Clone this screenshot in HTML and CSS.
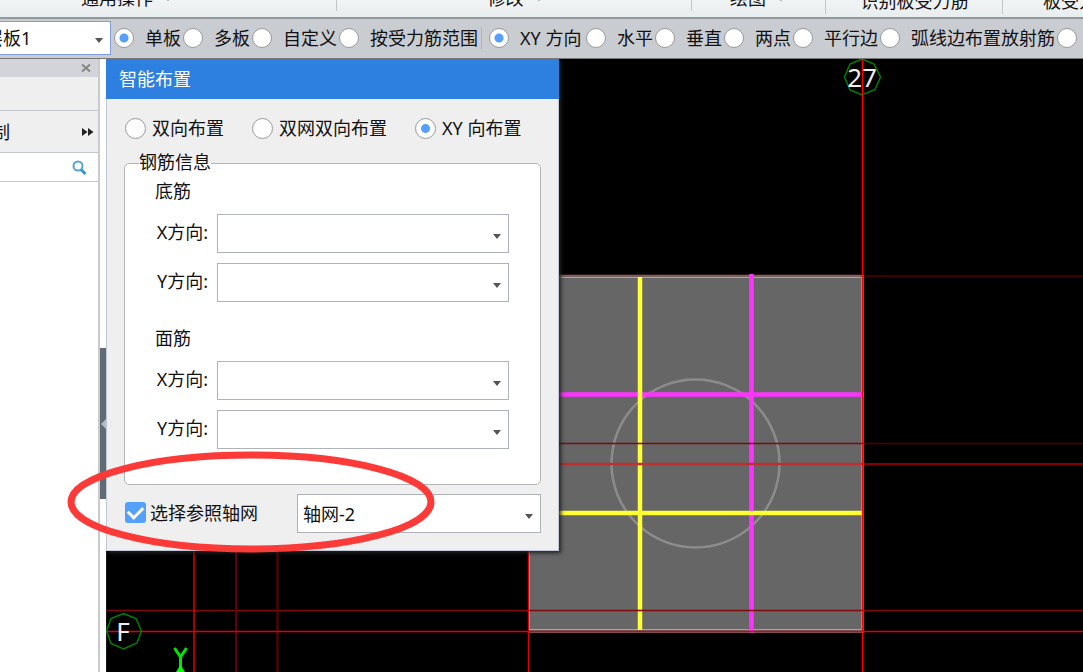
FILE: index.html
```html
<!DOCTYPE html>
<html lang="zh-CN">
<head>
<meta charset="utf-8">
<title>智能布置</title>
<link rel="stylesheet" href="styles.css">
</head>
<body>
<div class="app">
  <header class="ribbon">
    <div class="ribbon-group group-common">通用操作<i class="ribbon-arrow"></i></div>
    <div class="ribbon-group group-modify">修改<i class="ribbon-arrow"></i></div>
    <div class="ribbon-group group-draw">绘图<i class="ribbon-arrow"></i></div>
    <div class="ribbon-group group-detect">识别板受力筋</div>
    <div class="ribbon-group group-rebar">板受力筋</div>
  </header>

  <form class="options">
    <div class="combo combo-layer"><select aria-label="板层"><option>层板1</option></select></div>
    <div class="option-set">
      <label class="option"><input class="radio" type="radio" name="range" checked>单板</label>
      <label class="option"><input class="radio" type="radio" name="range">多板</label>
      <label class="option"><input class="radio" type="radio" name="range">自定义</label>
      <label class="option"><input class="radio" type="radio" name="range">按受力筋范围</label>
    </div>
    <div class="option-set option-set-direction">
      <label class="option option-xy"><input class="radio" type="radio" name="direction" checked>XY 方向</label>
      <label class="option"><input class="radio" type="radio" name="direction">水平</label>
      <label class="option"><input class="radio" type="radio" name="direction">垂直</label>
      <label class="option"><input class="radio" type="radio" name="direction">两点</label>
      <label class="option"><input class="radio" type="radio" name="direction">平行边</label>
      <label class="option"><input class="radio" type="radio" name="direction">弧线边布置放射筋</label>
      <input class="radio" type="radio" name="direction" aria-label="其他">
    </div>
  </form>

  <main class="workspace">
    <aside class="side">
      <div class="side-panel">
        <div class="side-header">
          <button class="icon-button" type="button" aria-label="关闭">
            <svg width="10" height="10" viewBox="0 0 10 10"><path d="M1 1.5L9 8.5M9 1.5L1 8.5" stroke="#858585" stroke-width="2"/></svg>
          </button>
        </div>
        <div class="side-row side-blank"></div>
        <div class="side-row side-tools">
          <span class="side-tool">制</span>
          <button class="icon-button" type="button" aria-label="更多">
            <svg width="12" height="10" viewBox="0 0 12 10"><path d="M0 1L5.5 5L0 9ZM6 1L11.5 5L6 9Z" fill="#222"/></svg>
          </button>
        </div>
        <div class="side-search">
          <input type="text" aria-label="搜索">
          <button class="icon-button" type="button" aria-label="搜索">
            <svg width="15" height="15" viewBox="0 0 15 15" fill="none"><circle cx="6" cy="6" r="4.5" stroke="#55a5d6" stroke-width="2"/><path d="M9 9.5L13.5 14" stroke="#3d94cc" stroke-width="3"/></svg>
          </button>
        </div>
      </div>
      <div class="splitter">
        <button class="splitter-handle" type="button" aria-label="收起"></button>
      </div>
    </aside>

    <section class="canvas">
      <svg class="drawing" aria-hidden="true">
        <g transform="translate(-106 -59)">
          <rect x="528" y="275" width="336" height="358" fill="#666"/>
          <circle cx="695.500" cy="463.500" r="84" fill="none" stroke="#8c8c8c" stroke-width="2.500"/>
          <path d="M528 277.500H863M861.500 277V630M529.500 277V630M528 629.500H863" fill="none" stroke="#a6a6a6"/>
          <path d="M528 275.500H864" stroke="#a94f50" stroke-width="1.500"/>
          <path d="M864 276H2400" stroke="#520000" stroke-width="1.500"/>
          <path d="M751.500 274V632.500M528 394.500H864" stroke="#ff33ff" stroke-width="4.500"/>
          <path d="M640 277V630M528 513H862" stroke="#ffff33" stroke-width="4.500"/>
          <path d="M528 443.500H864M106 610.500H2400" stroke="#7d0b0b" stroke-width="1.500"/>
          <path d="M864 443.500H2400" stroke="#520000" stroke-width="1.500"/>
          <path d="M528 464H864" stroke="#bd3030" stroke-width="2.500"/>
          <path d="M864 464H2400" stroke="#860000" stroke-width="2"/>
          <path d="M236 540V1600M277.500 540V1600" stroke="#650000" stroke-width="2"/>
          <path d="M106 631.500H2400M194 540V1600M528.500 540V1600" stroke="#e00008" stroke-width="1.500"/>
          <path d="M106 60V1600" stroke="#333"/>
          <path d="M862 59L874 64L880.500 77L875 89.500L862 95L850 90L844.500 77L850 64Z" fill="none" stroke="#008000" stroke-width="1.500"/>
          <text class="axis-text" x="862" y="87">27</text>
          <path d="M862.500 59V1600" stroke="#f00" stroke-width="1.500"/>
          <path d="M123.500 613.500L136 618.500L141.500 631L137 643L123.500 649L111 643.500L106.500 631L111 618.500Z" fill="none" stroke="#008000" stroke-width="1.500"/>
          <text class="axis-text" x="123" y="641">F</text>
          <path d="M174.500 648L180.500 657L186.500 648M180.500 656V672" fill="none" stroke="#00e600" stroke-width="3"/>
          <path d="M176 672L180.500 665L185 672Z" fill="#00ff00"/>
        </g>
      </svg>

      <form class="dialog" role="dialog" aria-label="智能布置">
        <h1 class="dialog-title">智能布置</h1>
        <div class="dialog-body">
          <div class="modes">
            <label class="mode"><input class="radio" type="radio" name="mode">双向布置</label>
            <label class="mode"><input class="radio" type="radio" name="mode">双网双向布置</label>
            <label class="mode"><input class="radio" type="radio" name="mode" checked>XY 向布置</label>
          </div>
          <fieldset class="rebar">
            <legend>钢筋信息</legend>
            <div class="rebar-set">
              <h2>底筋</h2>
              <div class="field"><label for="bx">X方向:</label><div class="combo"><select id="bx"><option></option></select></div></div>
              <div class="field"><label for="by">Y方向:</label><div class="combo"><select id="by"><option></option></select></div></div>
            </div>
            <div class="rebar-set">
              <h2>面筋</h2>
              <div class="field"><label for="tx">X方向:</label><div class="combo"><select id="tx"><option></option></select></div></div>
              <div class="field"><label for="ty">Y方向:</label><div class="combo"><select id="ty"><option></option></select></div></div>
            </div>
          </fieldset>
          <div class="reference">
            <label class="check-label"><input class="check" type="checkbox" checked>选择参照轴网</label>
            <div class="combo"><select aria-label="参照轴网"><option>轴网-2</option></select></div>
          </div>
        </div>
      </form>
    </section>

    <svg class="callout" width="368" height="104" viewBox="0 0 368 104" aria-hidden="true">
      <ellipse cx="184" cy="52" rx="180" ry="47" fill="none" stroke="#fc3a38" stroke-width="7"/>
    </svg>
  </main>
</div>
</body>
</html>
```
FILE: styles.css
```css
* { box-sizing: border-box; }

body {
  margin: 0;
  font-family: "Noto Sans", "Noto Sans CJK SC", sans-serif;
  font-size: 18px;
  line-height: 24px;
  color: #111;
}

select, input, button { font: inherit; color: inherit; margin: 0; }

.app {
  display: flex;
  flex-direction: column;
  height: 100vh;
  overflow: hidden;
}

/* Ribbon */
.ribbon {
  display: flex;
  flex: none;
  height: 19px;
  overflow: hidden;
  background: linear-gradient(#f1f4f4, #e8edee);
  border-bottom: 2px solid #92979c;
}
.ribbon-group {
  display: flex;
  flex: none;
  align-items: center;
  justify-content: center;
  height: 26px;
  margin-top: -15px;
  white-space: nowrap;
}
.ribbon-group + .ribbon-group { box-shadow: -1px 0 #c3c6c9; }
.group-common {
  width: 337px;
  padding-right: 166px;
  justify-content: flex-end;
}
.group-modify { width: 355px; }
.group-draw { width: 134px; padding-right: 4px; }
.group-detect { width: 177px; }
.group-rebar {
  flex: 1 0 auto;
  padding-left: 40px;
  justify-content: flex-start;
}
.ribbon .group-detect,
.ribbon .group-rebar { margin-top: -12px; }
.ribbon-arrow {
  margin: 2px 0 0 12px;
  border: 3px solid transparent;
  border-top: 4px solid #555;
  border-bottom: 0;
}

/* Shared controls */
.radio {
  appearance: none;
  flex: none;
  width: 20px;
  height: 20px;
  border: 1px solid #999;
  border-radius: 50%;
  background: #fff;
}
.radio:checked { background: radial-gradient(circle, #55a0ff 4px, #fff 5px); }

.combo { position: relative; display: flex; }
.combo select {
  appearance: none;
  width: 100%;
  height: 39px;
  padding: 0 24px 0 5px;
  border: 1px solid #afb2b9;
  border-radius: 0;
  background: #fff;
}
.combo::after {
  content: "";
  position: absolute;
  right: 8px;
  top: 50%;
  border: 4px solid transparent;
  border-top: 5px solid #555;
  border-bottom: 0;
  pointer-events: none;
}

/* Options bar */
.options {
  display: flex;
  flex: none;
  align-items: center;
  height: 40px;
  padding-bottom: 1px;
  overflow: hidden;
  background: #c9ccd1;
  border-bottom: 1px solid #777;
}
.combo-layer { flex: none; width: 130px; margin-left: -19px; }
.combo-layer select {
  height: 34px;
  padding-left: 3px;
  border: 1px solid #7f9cdc;
}
.option-set {
  display: flex;
  flex: none;
  gap: 2px;
  padding: 0 3px;
}
.option-set-direction {
  padding-left: 7px;
  border-left: 1px solid #b0b3b8;
}
.option {
  display: flex;
  align-items: center;
  gap: 11px;
  line-height: 22px;
  white-space: nowrap;
}
.option-xy { min-width: 95px; }
.option-set > .radio { margin-top: 1px; }

/* Side panel */
.workspace {
  position: relative;
  display: flex;
  flex: 1;
  min-height: 0;
}
.side { display: flex; flex: none; width: 106px; }
.side-panel {
  flex: 1;
  min-width: 0;
  background: #fff;
  border-right: 2px solid #cacacc;
}
.side-header {
  display: flex;
  align-items: center;
  justify-content: flex-end;
  height: 18px;
  padding-right: 7px;
  background: #d3d4d9;
}
.icon-button {
  display: flex;
  flex: none;
  padding: 0;
  border: 0;
  background: none;
}
.side-row { background: #efefef; border-bottom: 1px solid #c3c6ca; }
.side-blank { height: 34px; }
.side-tools {
  display: flex;
  align-items: center;
  justify-content: space-between;
  height: 42px;
  padding-right: 4px;
  overflow: hidden;
}
.side-tool { margin-left: -8px; }
.side-search {
  display: flex;
  align-items: center;
  height: 29px;
  padding-right: 11px;
  border-bottom: 1px solid #c3c6ca;
}
.side-search input {
  flex: 1;
  min-width: 0;
  height: 26px;
  border: 0;
}
.splitter {
  display: flex;
  flex: none;
  width: 6px;
  padding-top: 289px;
  background: #fff;
}
.splitter-handle {
  display: flex;
  align-items: center;
  justify-content: flex-end;
  width: 6px;
  height: 151px;
  padding: 0;
  border: 0;
  background: #616b75;
}
.splitter-handle::before {
  content: "";
  border: 5px solid transparent;
  border-right-color: #b5babf;
  border-left: 0;
}

/* Drawing area */
.canvas {
  position: relative;
  flex: 1;
  min-width: 0;
  overflow: hidden;
  background: #000;
}
.drawing { display: block; width: 100%; height: 100%; }
.axis-text {
  font-size: 26px;
  text-anchor: middle;
  fill: #eee;
}
.callout { position: absolute; left: 67px; top: 391px; }

/* Dialog window */
.dialog {
  position: absolute;
  left: 0;
  top: 0;
  width: 453px;
  background: #efefef;
  box-shadow: 2px 2px 4px #222;
}
.dialog-title {
  margin: 0;
  padding: 8px 13px;
  background: #2d7fe0;
  color: #fff;
  font-size: 18px;
  font-weight: 400;
}
.dialog-body {
  padding: 17px;
  border: 1px solid #c0c8d6;
  border-top: 0;
}
.modes { display: flex; gap: 28px; padding-left: 1px; }
.mode { display: flex; align-items: center; gap: 6px; }
.dialog .radio { width: 21px; height: 21px; }
.rebar {
  display: flex;
  flex-direction: column;
  gap: 24px;
  margin: 12px 0 9px;
  padding: 4px 31px 35px 30px;
  border: 1px solid #b4b4b4;
  border-radius: 5px;
  background: #fff;
}
.rebar legend {
  margin-left: -16px;
  padding: 0 0 3px;
  line-height: 20px;
}
.rebar-set { display: flex; flex-direction: column; gap: 10px; }
.rebar-set h2 {
  margin: 0 0 1px;
  font-size: 18px;
  font-weight: 400;
}
.field { display: flex; align-items: center; gap: 9px; }
.field label {
  display: flex;
  justify-content: flex-end;
  width: 53px;
  padding-bottom: 4px;
  white-space: nowrap;
}
.field .combo { flex: 1; }
.reference { display: flex; justify-content: space-between; align-items: center; }
.reference .combo { width: 244px; }
.check-label {
  display: flex;
  align-items: center;
  gap: 4px;
  padding: 0 0 2px 1px;
}
.check {
  appearance: none;
  width: 21px;
  height: 21px;
  border-radius: 3px;
  background: #55a0fa;
  display: grid;
  place-items: center;
}
.check:checked::before {
  content: "";
  width: 12px;
  height: 7px;
  margin-bottom: 4px;
  border: solid #fff;
  border-width: 0 0 3px 3px;
  transform: rotate(-45deg);
}
```
